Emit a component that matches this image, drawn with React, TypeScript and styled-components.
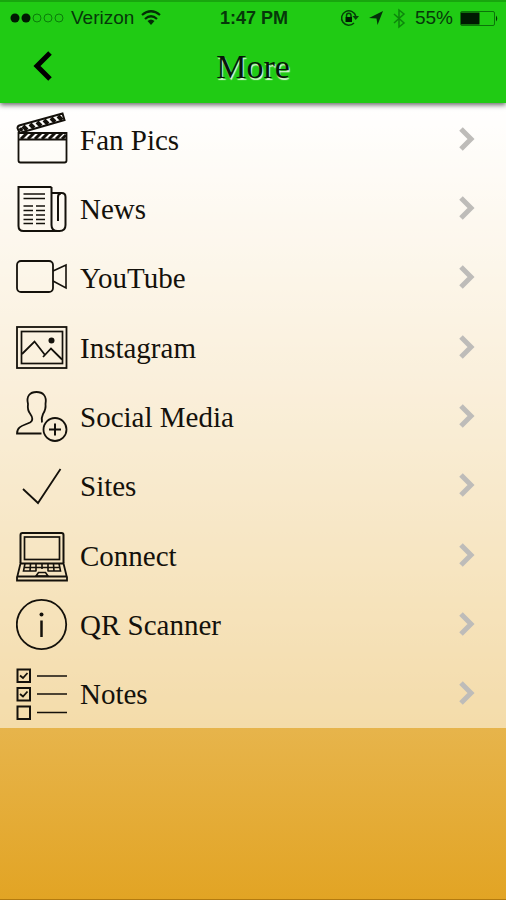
import React from "react";
import styled, { createGlobalStyle } from "styled-components";

const GlobalStyle = createGlobalStyle`
  *, *::before, *::after { box-sizing: border-box; }
  html { height: 100%; }
  body {
    margin: 0;
    min-height: 100%;
    background: linear-gradient(#ffffff 100px, #f4dcae 400px, #e7b54d 720px, #e2a424 100%) no-repeat;
    color: #14110b;
    font-family: "Liberation Serif", Georgia, serif;
  }
`;

const Screen = styled.div`
  display: flex;
  flex-direction: column;
  min-height: 100vh;
  border-bottom: 1px solid #b27a10;
`;

const Header = styled.header`
  position: relative;
  background: #20cb14;
  border-top: 2px solid #18a60e;
  box-shadow: 0 2px 5px rgba(0, 0, 0, 0.6);
`;

const StatusBar = styled.div`
  display: grid;
  grid-template-columns: 1fr auto 1fr;
  align-items: center;
  height: 32px;
  padding: 0 8px 0 10px;
  color: #06380a;
  font: 19px/24px "Liberation Sans", Arial, sans-serif;
`;

const StatusGroup = styled.div<{ $end?: boolean }>`
  display: flex;
  align-items: center;
  justify-content: ${(p) => (p.$end ? "flex-end" : "flex-start")};
  gap: ${(p) => (p.$end ? 10 : 7)}px;
`;

const Charge = styled.div`
  display: flex;
  align-items: center;
  gap: 7px;
`;

const Time = styled.span`
  font-size: 18px;
  font-weight: bold;
`;

const NavBar = styled.div`
  display: grid;
  grid-template-columns: 56px 1fr 56px;
  align-items: center;
  height: 69px;
  padding: 0 16px 4px;
`;

const BackButton = styled.button`
  display: flex;
  padding: 8px 16px;
  border: 0;
  background: none;
  color: #000;
  cursor: pointer;
`;

const Title = styled.h1`
  margin: 0;
  text-align: center;
  font-size: 34px;
  font-weight: normal;
  line-height: 40px;
  color: #07150a;
  text-shadow: 1px 2px 1px #e4f5e1;
`;

const Menu = styled.ul`
  display: grid;
  grid-template-rows: repeat(9, 1fr);
  height: 625px;
  margin: 0;
  padding: 1px 0 0;
  list-style: none;
  background: rgba(255, 255, 255, 0.53);
`;

const MenuItem = styled.li`
  display: flex;
`;

const MenuLink = styled.a`
  display: flex;
  flex: 1;
  align-items: center;
  gap: 12px;
  padding: 0 31px 0 16px;
  color: inherit;
  text-decoration: none;
`;

const Label = styled.span`
  flex: 1;
  padding-top: 2px;
  font-size: 29px;
  line-height: 36px;
`;

const LineIcon = styled.svg`
  flex: none;
  width: 52px;
  height: 56px;
  fill: none;
  stroke: currentColor;
  stroke-width: 2;
`;

const Glyph = styled.svg`
  display: block;
  flex: none;
  overflow: visible;
`;

const Chevron = () => (
  <Glyph width="16" height="24" viewBox="0 0 16 24" fill="none" stroke="#bebcb9" strokeWidth="5" aria-hidden="true">
    <path d="M2 2 L12 12 L2 22" />
  </Glyph>
);

const Clapper = () => (
  <>
    <path d="M2.5 22V49.500q0 2 2 2H48.500q2 0 2-2V22Z M2.5 28.500H50.5" strokeWidth="1.800" />
    <path d="M5 28l6-6M12 28l6-6M19 28l6-6M26 28l6-6M33 28l6-6M40 28l6-6M46 28l4-4" strokeWidth="3" />
    <path d="M3.500 22L1.500 17Q1.500 15 4 14.300L46.500 2.500L48.500 9Z" strokeWidth="2" />
    <path d="M7 15l4 4M14 13l4 4M21 11l4 4M28 9l4 4M35 7l4 4M42 5l4 4" strokeWidth="4" />
    <circle cx="5" cy="18.500" r="2" fill="currentColor" stroke="none" />
  </>
);

const Newspaper = () => (
  <>
    <path d="M35.500 7H2.500V46q0 5 5 5H43.500q6 0 6-6V17q0-4-4-4H35.500M35.500 7V45q0 6 6 6M42 41V17q0-3.500 3-3.500" />
    <path d="M7.500 14H29M7.500 18.500H29M7.500 26H17M7.500 30.500H17M7.500 35H17M7.500 39.500H17M7.500 43.500H17M20 26H29M20 30.500H29M20 35H29M20 39.500H29M20 43.500H29" strokeWidth="1.700" />
  </>
);

const Camcorder = () => (
  <>
    <rect x="1" y="12" width="36" height="31" rx="4" strokeWidth="1.800" />
    <path d="M37 22L50 16V39L37 32" strokeWidth="1.600" />
  </>
);

const Picture = () => (
  <>
    <rect x="1" y="8" width="49.500" height="41" strokeWidth="1.800" />
    <rect x="5.500" y="12.500" width="41" height="32" strokeWidth="1.700" />
    <path d="M6 35L18.500 22.500L29 36M27 38L35 29.500L46 40.500" strokeWidth="1.800" />
    <circle cx="35.500" cy="21.500" r="3" fill="currentColor" stroke="none" />
  </>
);

const AddPerson = () => (
  <>
    <path d="M25.500 45.500H1C1 38 8 37.500 14 34.500C17.500 32.500 16.500 29 14 25.500C12 23 11.500 20 12 16C10 8 14 4 20.500 4C27 4 31 8 29.500 16C30 20 29 23 27 26C25.500 29 25.500 32 26 34.500" strokeWidth="1.800" />
    <circle cx="39" cy="41.500" r="11.500" strokeWidth="1.800" />
    <path d="M33 41.500H45M39 35.500V47.500" />
  </>
);

const Check = () => <path d="M7 32L22 46L44.500 12" strokeWidth="1.800" />;

const Laptop = () => (
  <>
    <path d="M4.500 36V8q0-2 2-2H45.500q2 0 2 2V36" />
    <rect x="8.500" y="10" width="35" height="22.500" strokeWidth="1.700" />
    <path d="M4.500 36.500H47.500L50.700 49.500H1.300Z M1 49.500V53.500H51V49.500" strokeWidth="1.800" />
    <path d="M9 36.500L7.500 44H20.500M31.500 44H44.500L43 36.500M14.500 37L14 44M20 37V44M26 37V42M32 37V44M37.500 37L38 44M8.500 40.500H43.500" strokeWidth="1.600" />
    <path d="M20 49L22.500 45.500H29.500L32 49Z" strokeWidth="1.600" />
  </>
);

const Info = () => (
  <>
    <circle cx="25.500" cy="28.500" r="24.700" strokeWidth="1.800" />
    <path d="M25.500 24.500V41" strokeWidth="2.500" />
    <circle cx="25.500" cy="18.500" r="2" fill="currentColor" stroke="none" />
  </>
);

const Checklist = () => (
  <>
    <path d="M1.500 4.500H14V17H1.500ZM1.500 23H14V35.500H1.500ZM1.500 41.500H14V54H1.500Z" />
    <path d="M4 10.500L7 13L11.500 8M4 29L7 31.500L11.500 26.500" strokeWidth="1.800" />
    <path d="M21 11H51M21 29H51M21 47.500H51" strokeWidth="1.700" />
  </>
);

const items = [
  { label: "Fan Pics", Icon: Clapper },
  { label: "News", Icon: Newspaper },
  { label: "YouTube", Icon: Camcorder },
  { label: "Instagram", Icon: Picture },
  { label: "Social Media", Icon: AddPerson },
  { label: "Sites", Icon: Check },
  { label: "Connect", Icon: Laptop },
  { label: "QR Scanner", Icon: Info },
  { label: "Notes", Icon: Checklist },
];

const Signal = () => (
  <Glyph width="54" height="12" viewBox="0 0 54 12" fill="none" stroke="#0b7d0a" role="img" aria-label="Signal 2 of 5">
    <circle cx="5" cy="6" r="4.500" fill="#001a02" stroke="none" />
    <circle cx="16" cy="6" r="4.500" fill="#001a02" stroke="none" />
    <circle cx="27" cy="6" r="4" />
    <circle cx="38" cy="6" r="4" />
    <circle cx="49" cy="6" r="4" />
  </Glyph>
);

const Wifi = () => (
  <Glyph width="20" height="16" viewBox="0 0 20 16" fill="none" stroke="#042e07" strokeWidth="2.200" role="img" aria-label="Wi-Fi">
    <path d="M1 5Q10-2.500 19 5M4 9Q10 3.500 16 9" />
    <path d="M6.500 11Q10 8 13.500 11L10 15Z" fill="#042e07" stroke="none" />
  </Glyph>
);

const RotationLock = () => (
  <Glyph width="19" height="18" viewBox="0 0 19 18" fill="none" stroke="#064009" strokeWidth="1.500" role="img" aria-label="Rotation lock">
    <path d="M14 14A7.200 7.200 0 1 1 15.700 7" />
    <path d="M12.500 7H19L15.700 11Z" fill="#064009" stroke="none" />
    <rect x="5.500" y="8" width="6.500" height="5" fill="#001a02" stroke="none" />
    <path d="M6.500 8V6.500a2.200 2.200 0 0 1 4.500 0V8" />
  </Glyph>
);

const Location = () => (
  <Glyph width="14" height="15" viewBox="0 0 14 15" fill="#04300a" role="img" aria-label="Location">
    <path d="M14 0L8.500 14L7.500 7.500L0 7Z" />
  </Glyph>
);

const Bluetooth = () => (
  <Glyph width="12" height="19" viewBox="0 0 12 19" fill="none" stroke="#0d850c" strokeWidth="1.500" role="img" aria-label="Bluetooth">
    <path d="M1 5L11 14L6 18V1L11 5L1 14" />
  </Glyph>
);

const Battery = () => (
  <Glyph width="38" height="15" viewBox="0 0 38 15" role="img" aria-label="Battery">
    <rect x="0.500" y="0.500" width="34" height="14" rx="1.500" fill="none" stroke="#0b7409" />
    <rect x="1" y="1.500" width="18.500" height="12" fill="#001a02" />
    <path d="M36 4.500q2.500 3 0 6Z" fill="#042e07" />
  </Glyph>
);

export default function App() {
  return (
    <>
      <GlobalStyle />
      <Screen>
        <Header>
          <StatusBar>
            <StatusGroup>
              <Signal />
              <span>Verizon</span>
              <Wifi />
            </StatusGroup>
            <Time>1:47 PM</Time>
            <StatusGroup $end>
              <RotationLock />
              <Location />
              <Bluetooth />
              <Charge>
                <span>55%</span>
                <Battery />
              </Charge>
            </StatusGroup>
          </StatusBar>
          <NavBar>
            <BackButton type="button" aria-label="Back">
              <Glyph width="20" height="32" viewBox="0 0 20 32" fill="none" stroke="currentColor" strokeWidth="5" aria-hidden="true">
                <path d="M18 2L5 15L18 28" />
              </Glyph>
            </BackButton>
            <Title>More</Title>
          </NavBar>
        </Header>
        <nav aria-label="More">
          <Menu>
            {items.map(({ label, Icon }) => (
              <MenuItem key={label}>
                <MenuLink href="#">
                  <LineIcon viewBox="0 0 52 56" aria-hidden="true">
                    <Icon />
                  </LineIcon>
                  <Label>{label}</Label>
                  <Chevron />
                </MenuLink>
              </MenuItem>
            ))}
          </Menu>
        </nav>
      </Screen>
    </>
  );
}
